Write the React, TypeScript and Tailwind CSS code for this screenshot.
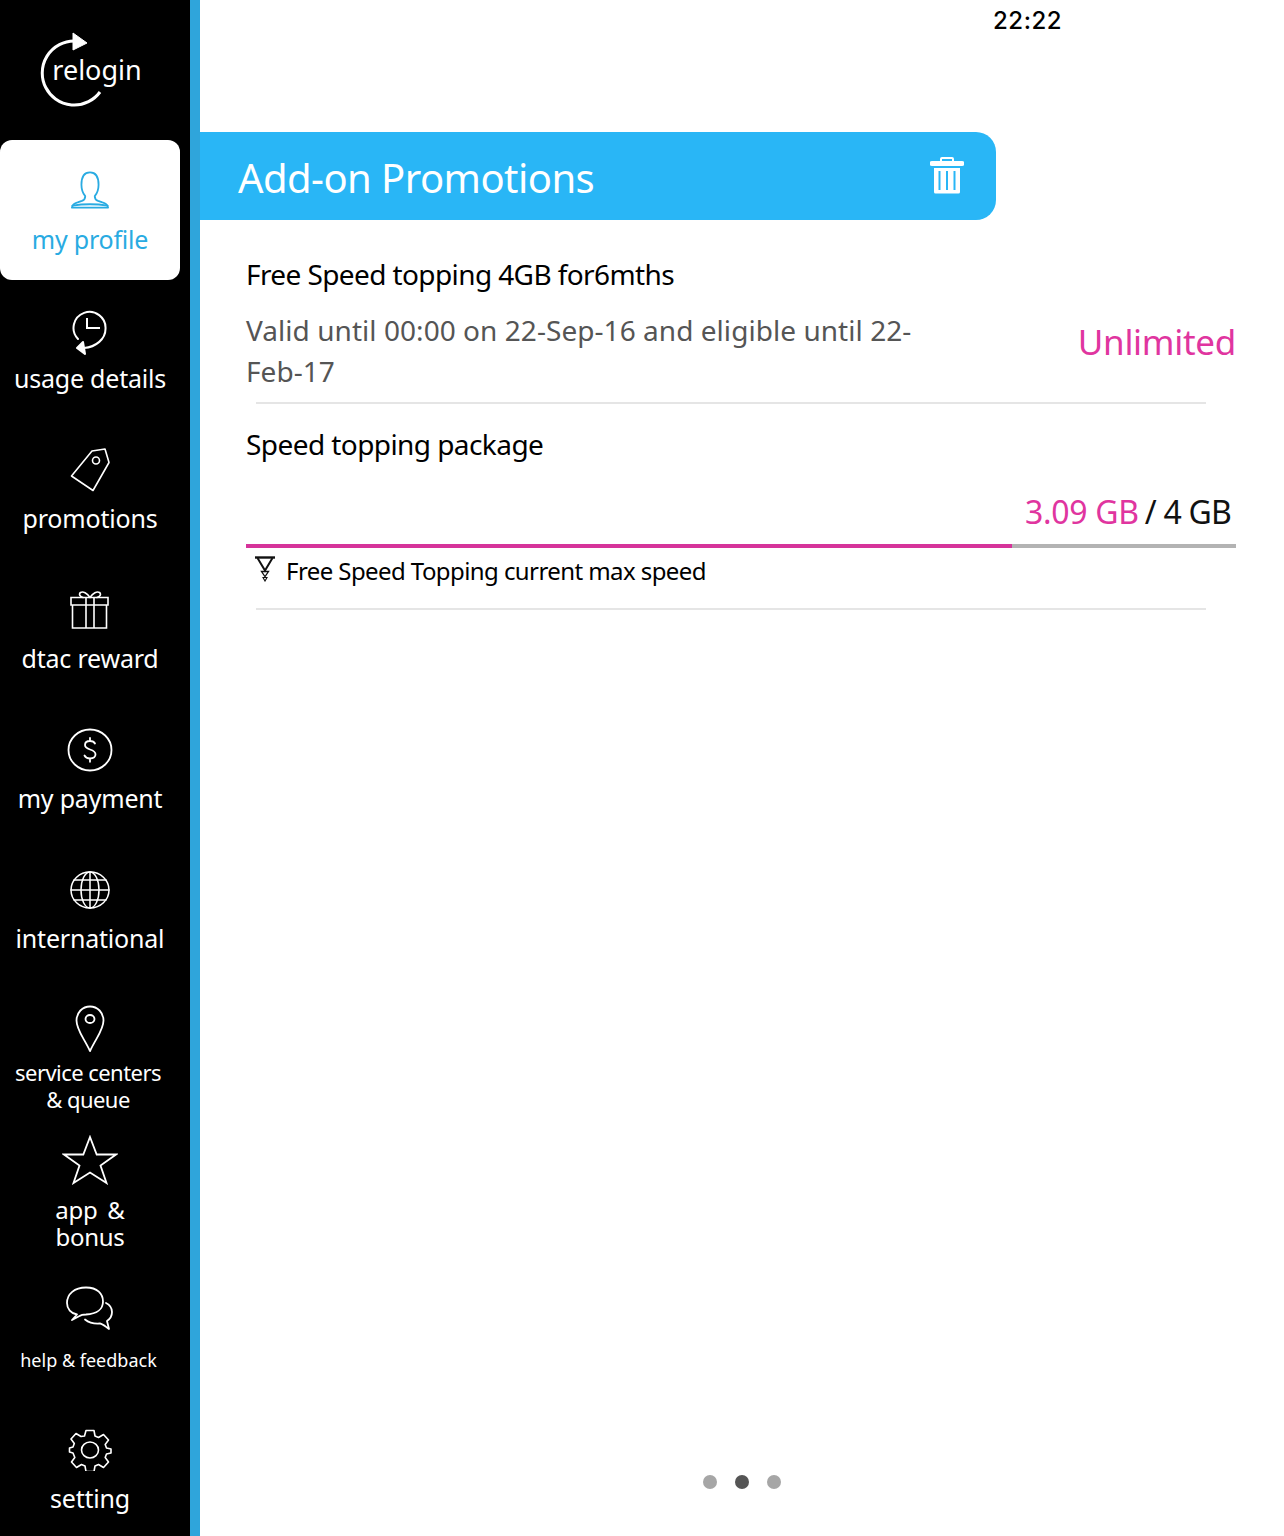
import type { ReactNode } from 'react'

const svgProps = {
  fill: 'none',
  stroke: 'currentColor',
  strokeWidth: 1.6,
  strokeLinecap: 'round' as const,
  strokeLinejoin: 'round' as const,
}

function ProfileIcon() {
  return (
    <svg width="40" height="40" viewBox="0 0 42 40" {...svgProps} strokeWidth={1.9}>
      <path d="M2 38.500h38c-.5-3-2.500-4.500-6-5.500l-4.500-1.500c-2-.8-3.500-2.500-3.500-5 2.500-3 4-6.500 4-12C30 6 26.500 1.500 21 1.500S12 6 12 14.500c0 5.500 1.500 9 4 12 0 2.500-1.500 4.200-3.500 5L8 33c-3.500 1-5.500 2.500-6 5.500z" />
      <path d="M2.500 36.500c12-2 25-2 37 0" />
    </svg>
  )
}

function UsageIcon() {
  return (
    <svg width="36" height="46" viewBox="0 0 36 46" className="mt-[4px]" {...svgProps} strokeWidth={2}>
      <path d="M6 30A16 16 0 1 1 33.500 20C33.500 30 24 38 12 39" />
      <path d="M15 10v9h12" strokeLinecap="square" strokeLinejoin="miter" />
      <path d="M5 39l6-6 2 12z" fill="currentColor" />
    </svg>
  )
}

function TagIcon() {
  return (
    <svg width="40" height="44" viewBox="0 0 40 44" {...svgProps}>
      <path d="M1.500 28L22 3l13-2 4 13.500L23 42.500z" />
      <circle cx="26" cy="12.500" r="3.500" />
    </svg>
  )
}

function GiftIcon() {
  return (
    <svg width="40" height="38" viewBox="0 0 40 38" {...svgProps} strokeLinecap="square" strokeLinejoin="miter">
      <path d="M1 6.500h37v7.500H1zM2.500 14v23h34V14M16 6.500V37M24 6.500V37" />
      <path d="M20 6.500C17 2 13 0 10.500 1.500 8.500 3 10 6 13 6.500M20 6.500C23 2 27 0 29.500 1.500 31.500 3 30 6 27 6.500" strokeLinecap="round" />
    </svg>
  )
}

function PaymentIcon() {
  return (
    <svg width="46" height="44" viewBox="0 0 46 44" {...svgProps} strokeWidth={1.8}>
      <ellipse cx="23" cy="22" rx="21.500" ry="20.500" />
      <path d="M28 15.500c-1-2-3-2.500-5-2.500-3 0-5 1.500-5 4s2 3.500 5 4.500 5.500 2 5.500 4.800-2.300 4.200-5.500 4.200c-2.500 0-4.500-1-5.500-3M23 10v3M23 30.800v3" />
    </svg>
  )
}

function GlobeIcon() {
  return (
    <svg width="40" height="38" viewBox="0 0 40 38" {...svgProps} strokeWidth={1.5}>
      <ellipse cx="20" cy="19" rx="19" ry="18" />
      <ellipse cx="20" cy="19" rx="9" ry="18" />
      <path d="M20 1v36M1 19h38M4 9h32M4 29h32" />
    </svg>
  )
}

function PinIcon() {
  return (
    <svg width="30" height="48" viewBox="0 0 30 48" {...svgProps} strokeWidth={1.8}>
      <path d="M15 46C9 33 1.500 25 1.500 15.500 1.500 7.500 7.500 1.500 15 1.500s13.500 6 13.500 14C28.500 25 21 33 15 46z" />
      <ellipse cx="15" cy="14" rx="4.500" ry="4" />
    </svg>
  )
}

function StarIcon() {
  return (
    <svg width="56" height="50" viewBox="0 0 56 50" {...svgProps} strokeWidth={1.8} strokeLinejoin="miter">
      <path d="M28 2l6.700 17.500H54L38.500 30.500 44.500 48 28 37.500 11.500 48l6-17.500L2 19.500h19.300z" />
    </svg>
  )
}

function ChatIcon() {
  return (
    <svg width="48" height="44" viewBox="0 0 48 44" {...svgProps} strokeWidth={1.8}>
      <path d="M6 34l5-5.500C5 27.500 1 23 1 17 1 8 8.500 1.500 20 1.500S37 8 37 15.500C37 23 31 28 20 28.500c-3 0-4.500 0-6.500 1.500z" />
      <path d="M40 17c4 2 6 5 6 9 0 4-2 7-5 9l2 8c-3-2-6-5-9-5.500-6 .5-10 0-15-4" />
    </svg>
  )
}

function GearIcon() {
  return (
    <svg width="44" height="42" viewBox="0 0 44 42" {...svgProps} strokeWidth={1.6}>
      <path d="M18 1.500h8l1 5.500 3.500 1.500 5-3 5 5.500-3.300 4.500 1.300 3.500 4.500 1v4l-4.500 1-1.300 3.500 3.300 4.500-5 5.500-5-3-3.500 1.500-1 5.500h-8l-1-5.500-3.500-1.500-5 3-5-5.500 3.300-4.500L5 24l-3.500-1v-4L5 18l1.300-3.500L3 10l5-5.500 5 3L16.500 7z" />
      <ellipse cx="22" cy="21" rx="8.500" ry="8" />
    </svg>
  )
}

function TrashIcon() {
  return (
    <svg width="34" height="38" viewBox="0 0 34 38" fill="white" className="-mt-[3px]">
      <path d="M12 1h10a2 2 0 0 1 2 2v2h8a2 2 0 0 1 0 5H2a2 2 0 0 1 0-5h8V3a2 2 0 0 1 2-2zm0 2v2h10V3z" fillRule="evenodd" />
      <path d="M4 12h26v24a1.500 1.500 0 0 1-1.500 1.500h-23A1.500 1.500 0 0 1 4 36zm4.500 3v19h2V15zm7.500 0v19h2V15zm7.500 0v19h2V15z" fillRule="evenodd" />
    </svg>
  )
}

function SpeedIcon() {
  return (
    <svg width="22" height="26" viewBox="0 0 22 26" fill="none" stroke="#111" strokeWidth={2} strokeLinejoin="miter" className="mt-[2px]">
      <path d="M1 1.500h20" strokeWidth={2.4} />
      <path d="M3.500 2l7.500 12.500L18.500 2" />
      <path d="M7.500 15.500h7l-3.500 5z" strokeWidth={1.3} />
      <path d="M9 21.500h4l-2 3.500z" strokeWidth={1.1} />
    </svg>
  )
}

function NavItem({ icon, label, active, text = 'text-[25px] leading-[28px] tracking-[-0.2px]', pt = 'pt-[28px]', gap = 'gap-[12px]' }: {
  icon: ReactNode
  label: ReactNode
  active?: boolean
  text?: string
  pt?: string
  gap?: string
}) {
  return (
    <div className={`h-[140px] shrink-0 ${pt} ${gap} flex flex-col items-center text-center ${active ? 'rounded-xl bg-white text-[#29abe2]' : 'text-white'}`}>
      <div className="flex h-[44px] items-center justify-center">{icon}</div>
      <div className={text}>{label}</div>
    </div>
  )
}

export default function App() {
  return (
    <div className="flex h-[1536px] w-[1284px] overflow-hidden bg-white font-['Noto_Sans',sans-serif]">
      <aside className="flex w-[200px] shrink-0 flex-col border-r-[10px] border-[#2fa5db] bg-black pr-[10px]">
        <div className="relative flex h-[140px] shrink-0 items-center justify-center">
          <svg width="72" height="78" viewBox="0 0 72 78" className="absolute left-[38px] top-[30px]" fill="none" stroke="white" strokeWidth={3}>
            <path d="M62 62A32 32 0 1 1 36 11" />
            <path d="M35 3l14 10-14 7z" fill="white" strokeWidth={1} />
          </svg>
          <span className="relative left-[7px] -top-[1px] text-[27px] leading-none text-white">relogin</span>
        </div>
        <NavItem active gap="gap-[13px]" icon={<ProfileIcon />} label="my profile" />
        <NavItem icon={<UsageIcon />} label="usage details" />
        <NavItem icon={<TagIcon />} label="promotions" />
        <NavItem icon={<GiftIcon />} label="dtac reward" />
        <NavItem icon={<PaymentIcon />} label="my payment" />
        <NavItem icon={<GlobeIcon />} label="international" />
        <NavItem
          pt="pt-[27px]"
          gap="gap-[8px]"
          text="-ml-[4px] text-[22px] leading-[27px] tracking-[-0.55px]"
          icon={<PinIcon />}
          label={<>service centers<br />&amp; queue</>}
        />
        <NavItem
          pt="pt-[18px]"
          gap="gap-[14px]"
          text="text-[24px] leading-[27px] tracking-[-0.3px] [word-spacing:4px]"
          icon={<StarIcon />}
          label={<>app &amp;<br />bonus</>}
        />
        <NavItem
          pt="pt-[26px]"
          gap="gap-[18px]"
          text="-ml-[3px] text-[18px] leading-[24px]"
          icon={<ChatIcon />}
          label="help & feedback"
        />
        <NavItem icon={<GearIcon />} label="setting" />
      </aside>

      <main className="flex flex-1 flex-col">
        <div className="flex h-[132px] justify-end pr-[222px] pt-[7px]">
          <span className="font-['Inter',sans-serif] text-[24px] font-medium leading-[28px] tracking-[0.5px] text-black">22:22</span>
        </div>
        <div className="flex h-[88px] w-[796px] items-center justify-between rounded-r-[20px] bg-[#29b6f6] pl-[38px] pr-[32px]">
          <span className="block pt-[4px] text-[40px] leading-none tracking-[-0.55px] text-white">Add-on Promotions</span>
          <TrashIcon />
        </div>

        <div className="pl-[46px] pr-[48px]">
          <div className="pt-[35px] text-[28px] leading-[38px] tracking-[-0.6px] text-black">Free Speed topping 4GB for6mths</div>
          <div className="flex items-start justify-between pt-[17px]">
            <div className="w-[680px] text-[28px] leading-[41px] tracking-[0.05px] text-[#555]">
              Valid until 00:00 on 22-Sep-16 and eligible until 22-Feb-17
            </div>
            <div className="pt-[8px] text-[35px] leading-[48px] tracking-[-0.3px] text-[#e0359f]">Unlimited</div>
          </div>
          <div className="ml-[10px] mr-[30px] mt-[10px] h-[2px] bg-[#e5e5e5]" />

          <div className="pt-[21px] text-[28px] leading-[38px] tracking-[-0.57px] text-black">Speed topping package</div>

          <div className="flex justify-end pr-[5px] pt-[27px] text-[32px] leading-[44px]">
            <span className="tracking-[-0.3px] text-[#e0359f]">3.09 GB</span>
            <span className="ml-[6px] tracking-[-0.8px] text-[#111]">/ 4 GB</span>
          </div>
          <div className="mt-[10px] flex h-[4px]">
            <div className="w-[766px] bg-[#d6339a]" />
            <div className="flex-1 bg-[#b3b3b3]" />
          </div>
          <div className="flex pl-[8px] pt-[6px]">
            <SpeedIcon />
            <span className="ml-[10px] text-[24px] leading-[34px] tracking-[-0.58px] text-black">Free Speed Topping current max speed</span>
          </div>
          <div className="ml-[10px] mr-[30px] mt-[20px] h-[2px] bg-[#e5e5e5]" />
        </div>

        <div className="mt-[865px] flex justify-center gap-[18px]">
          <span className="h-[14px] w-[14px] rounded-full bg-[#a6a6a6]" />
          <span className="h-[14px] w-[14px] rounded-full bg-[#555]" />
          <span className="h-[14px] w-[14px] rounded-full bg-[#a6a6a6]" />
        </div>
      </main>
    </div>
  )
}
